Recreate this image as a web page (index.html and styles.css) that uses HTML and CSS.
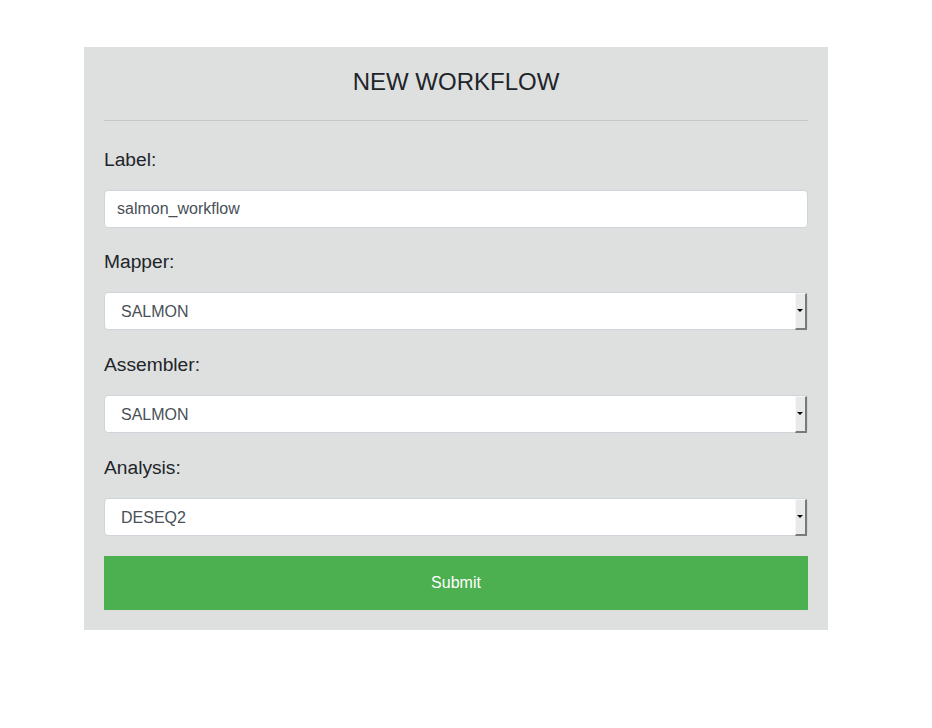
FILE: index.html
```html
<!DOCTYPE html>
<html>
<head>
<meta charset="utf-8">
<link rel="stylesheet" href="styles.css">
</head>
<body>
<div class="page">
  <form class="card">
    <h1 class="title">NEW WORKFLOW</h1>
    <hr class="rule">
    <div class="group first">
      <label class="label">Label:</label>
      <input class="control" type="text" value="salmon_workflow">
    </div>
    <div class="group">
      <label class="label">Mapper:</label>
      <div class="select-wrap"><select class="control select"><option>SALMON</option></select></div>
    </div>
    <div class="group">
      <label class="label">Assembler:</label>
      <div class="select-wrap"><select class="control select"><option>SALMON</option></select></div>
    </div>
    <div class="group">
      <label class="label">Analysis:</label>
      <div class="select-wrap"><select class="control select"><option>DESEQ2</option></select></div>
    </div>
    <button class="submit" type="button">Submit</button>
  </form>
</div>
</body>
</html>
```
FILE: styles.css
```css
html, body {
  margin: 0;
  padding: 0;
  background: #ffffff;
  font-family: "Liberation Sans", Arial, sans-serif;
  color: #212529;
}
.page {
  padding: 47px 0 0 84px;
}
.card {
  width: 704px;
  padding: 20px;
  background: #dedfdf;
  display: flex;
  flex-direction: column;
}
.title {
  margin: 0;
  font-size: 24px;
  font-weight: 400;
  line-height: 29px;
  text-align: center;
  color: #212529;
}
.rule {
  margin: 24px 0 24px;
  border: 0;
  border-top: 1px solid #c6c8c8;
  height: 0;
}
.group {
  display: flex;
  flex-direction: column;
  margin-bottom: 20px;
}
.group.first {
  margin-bottom: 19px;
}
.label {
  font-size: 19.2px;
  line-height: 29px;
  margin-bottom: 16px;
  color: #212529;
}
.control {
  box-sizing: border-box;
  width: 100%;
  height: 38px;
  margin: 0;
  padding: 0 12px;
  font-family: "Liberation Sans", Arial, sans-serif;
  font-size: 16px;
  color: #495057;
  background: #ffffff;
  border: 1px solid #ced4da;
  border-radius: 4px;
  outline: none;
}
.select-wrap {
  position: relative;
}
.select {
  appearance: none;
  -webkit-appearance: none;
  padding-left: 16px;
}
.select-wrap::after {
  content: "";
  position: absolute;
  top: 1px;
  right: 1px;
  width: 12px;
  height: 37px;
  box-sizing: border-box;
  background: #e9e9e9;
  border-left: 1px solid #f7f7f7;
  border-top: 1px solid #f7f7f7;
  border-right: 2px solid #7a7a7a;
  border-bottom: 2px solid #7a7a7a;
  pointer-events: none;
}
.select-wrap::before {
  content: "";
  position: absolute;
  top: 17px;
  right: 5px;
  width: 0;
  height: 0;
  border-left: 3px solid transparent;
  border-right: 3px solid transparent;
  border-top: 3px solid #000;
  z-index: 2;
  pointer-events: none;
}
.submit {
  height: 54px;
  width: 100%;
  border: 0;
  border-radius: 0;
  background: #4caf50;
  color: #ffffff;
  font-family: "Liberation Sans", Arial, sans-serif;
  font-size: 16px;
}
```
